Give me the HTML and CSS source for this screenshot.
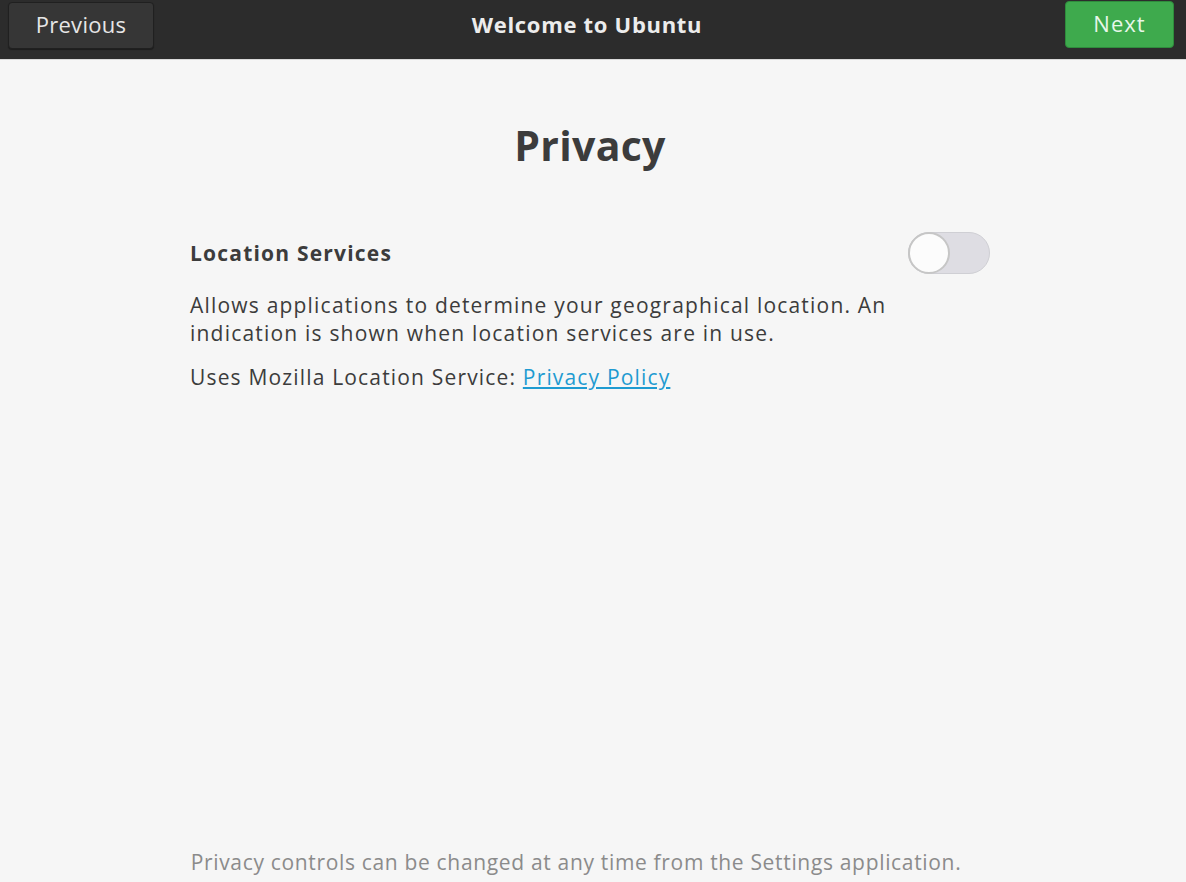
FILE: index.html
```html
<!DOCTYPE html>
<html lang="en">
<head>
<meta charset="utf-8">
<title>Welcome to Ubuntu</title>
<link rel="stylesheet" href="styles.css">
</head>
<body>
<div class="window">
  <header class="headerbar">
    <button class="btn btn-prev">Previous</button>
    <div class="title">Welcome to Ubuntu</div>
    <button class="btn btn-next">Next</button>
  </header>
  <main class="content">
    <h1 class="page-title">Privacy</h1>
    <section class="panel">
      <div class="row">
        <div class="label">Location Services</div>
        <div class="switch"><div class="knob"></div></div>
      </div>
      <p class="desc">Allows applications to determine your geographical location. An<br>indication is shown when location services are in use.</p>
      <p class="uses">Uses Mozilla Location Service: <a href="#" class="link">Privacy Policy</a></p>
    </section>
    <div class="spacer"></div>
    <p class="footer">Privacy controls can be changed at any time from the Settings application.</p>
  </main>
</div>
</body>
</html>
```

FILE: styles.css
```css
* { box-sizing: border-box; }
html, body {
  margin: 0;
  padding: 0;
  width: 1186px;
  height: 882px;
  overflow: hidden;
  background: #f6f6f6;
  font-family: "Open Sans", "Noto Sans", "DejaVu Sans", sans-serif;
}
.window {
  display: flex;
  flex-direction: column;
  height: 882px;
}
.headerbar {
  height: 60px;
  flex: none;
  background: #2c2c2c;
  border-bottom: 1px solid #d9d9d9;
  display: grid;
  grid-template-columns: 1fr auto 1fr;
  align-items: start;
  padding: 1px 12px 0 8px;
}
.btn {
  font-family: inherit;
  font-size: 22px;
  letter-spacing: 0.3px;
  height: 47px;
  border-radius: 4px;
  cursor: pointer;
  padding: 0 0 3px;
}
.btn-prev {
  justify-self: start;
  width: 146px;
  margin-top: 1px;
  background: #363636;
  color: #e6e6e6;
  border: 1px solid #202020;
  box-shadow: 0 1px 1px rgba(0,0,0,0.35);
}
.btn-next {
  justify-self: end;
  width: 109px;
  background: #3eaa4d;
  color: #e8f7ea;
  border: 1px solid #2e8c3c;
  letter-spacing: 1px;
}
.title {
  color: #ececec;
  font-weight: bold;
  font-size: 22px;
  letter-spacing: 0.7px;
  line-height: 46px;
  margin-right: 8px;
}
.content {
  flex: 1;
  display: flex;
  flex-direction: column;
  align-items: center;
  color: #3c3c3c;
  padding-right: 6px;
}
.page-title {
  margin: 60px 0 0;
  font-size: 41px;
  line-height: 50px;
  font-weight: bold;
  letter-spacing: 0.3px;
  color: #3c3c3c;
}
.panel {
  width: 800px;
  margin-top: 62px;
}
.row {
  display: flex;
  justify-content: space-between;
  align-items: center;
  height: 42px;
}
.label {
  font-weight: bold;
  font-size: 21px;
  letter-spacing: 1.2px;
}
.switch {
  width: 82px;
  height: 42px;
  border-radius: 21px;
  background: #dedde3;
  border: 1px solid #cfcfd4;
  position: relative;
}
.knob {
  position: absolute;
  left: -1px;
  top: -1px;
  width: 42px;
  height: 42px;
  border-radius: 50%;
  background: #fcfcfc;
  border: 2px solid #c6c6c6;
}
.desc {
  margin: 17px 0 0;
  font-size: 21px;
  letter-spacing: 1.2px;
  line-height: 28px;
}
.uses {
  margin: 16px 0 0;
  font-size: 21px;
  letter-spacing: 1.17px;
  line-height: 28px;
}
.link {
  color: #1f9bd1;
  text-decoration: underline;
}
.spacer { flex: 1; }
.footer {
  margin: 0 0 6px;
  font-size: 21px;
  letter-spacing: 0.67px;
  line-height: 28px;
  color: #8b8b8b;
  padding-right: 28px;
}
```
